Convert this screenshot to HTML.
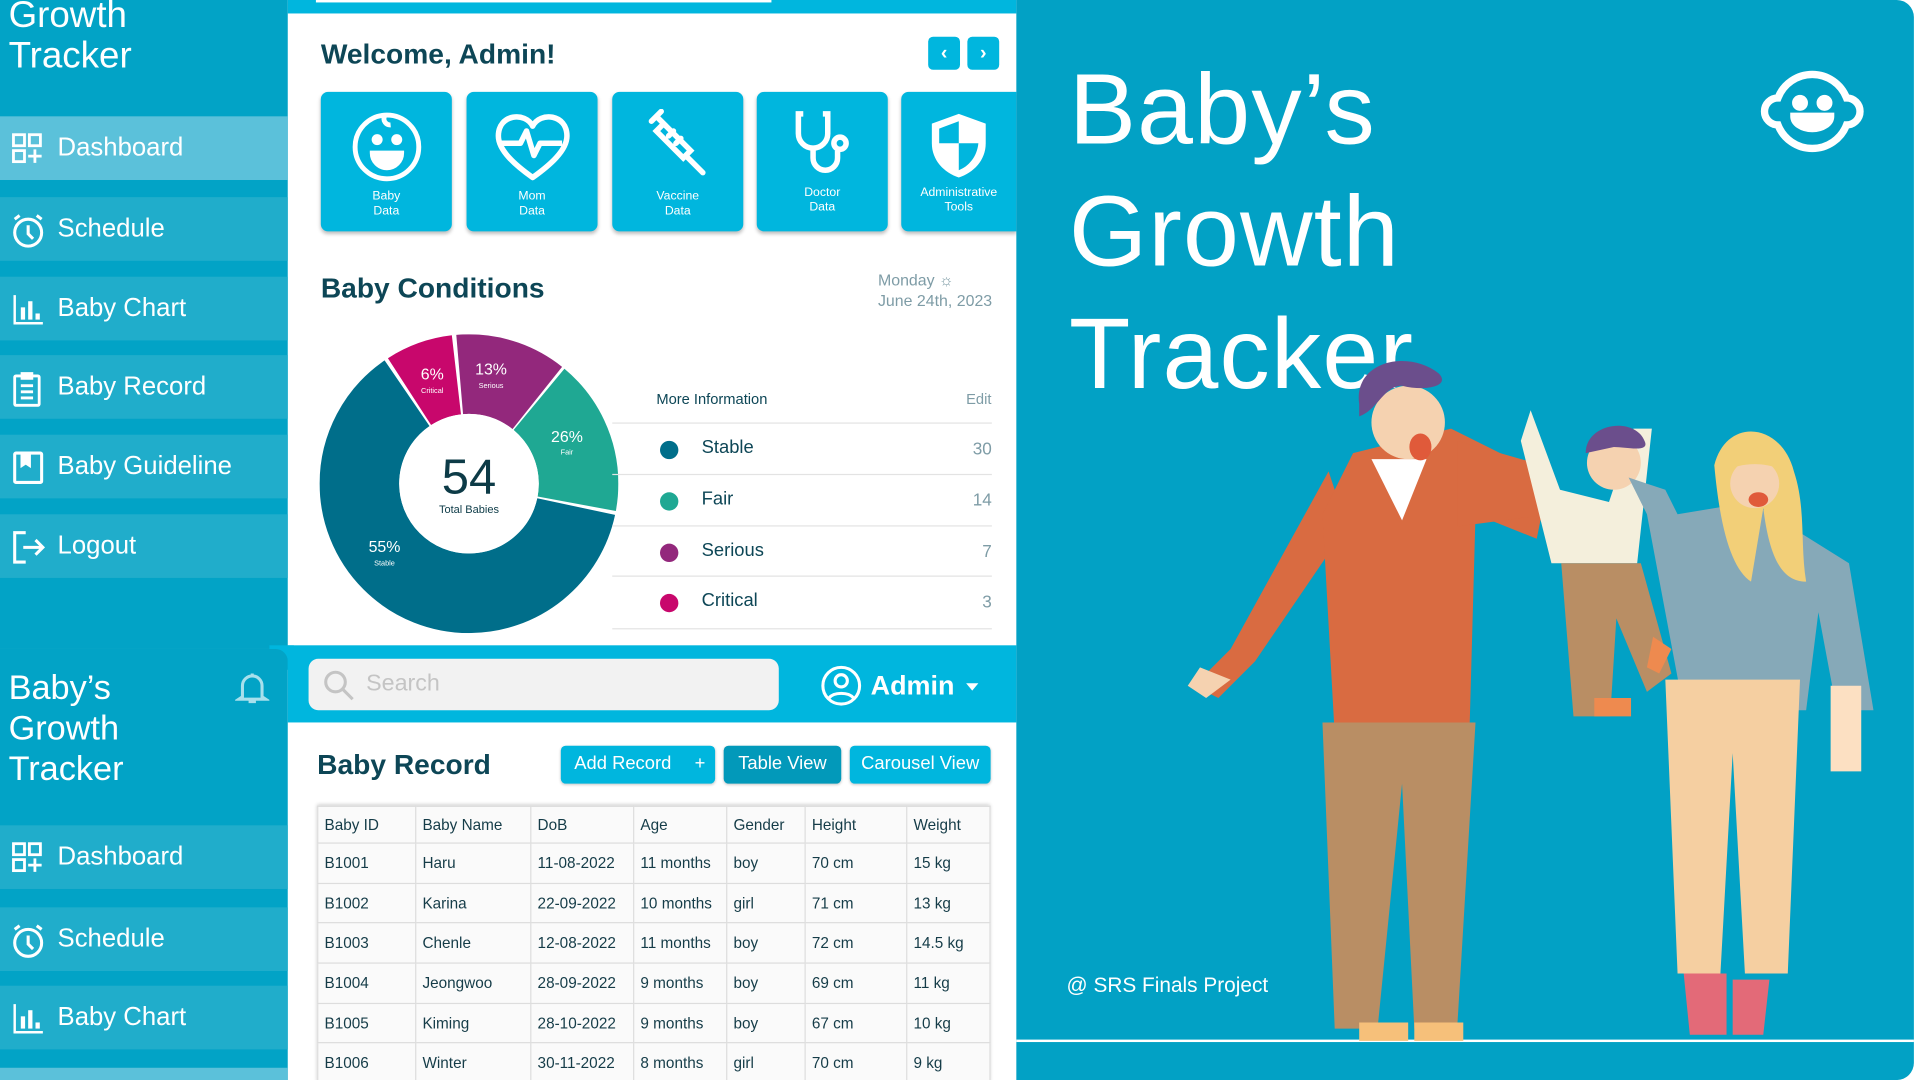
<!DOCTYPE html>
<html><head><meta charset="utf-8">
<style>
*{margin:0;padding:0;box-sizing:border-box}
html,body{width:1920px;height:1080px;overflow:hidden;background:#fff}
#w{position:absolute;left:0;top:0;width:1920px;height:1080px;overflow:hidden}
#s{position:absolute;left:0;top:0;width:1568px;height:882px;overflow:hidden;transform:scale(1.2245);transform-origin:0 0;font-family:"Liberation Sans",sans-serif}
.a{position:absolute}
.side{background:#02a3c6}
.item{position:absolute;left:0;width:235px;height:52px;background:#20adcb;color:#fff;font-size:21px;line-height:52px;padding-left:47px}
.item svg{position:absolute;left:9px;top:13px}
.card{position:absolute;top:75px;width:107px;height:114px;background:#00b6de;border-radius:6px;box-shadow:0 2px 3px rgba(0,0,0,.25);color:#fff;font-size:10px;text-align:center;line-height:12px}
.card .l{position:absolute;left:0;right:0;bottom:10px}
.card svg{position:absolute;left:50%;top:14px;transform:translateX(-50%)}
.dk{color:#0d4656}
.row{position:absolute;left:500px;width:310px;border-top:1.5px solid #e3e3e3;height:42px}
.row .d{position:absolute;left:39px;top:14px;width:15px;height:15px;border-radius:50%}
.row .t{position:absolute;left:73px;top:11px;font-size:15px;color:#0d4656}
.row .v{position:absolute;right:0;top:12px;font-size:14px;color:#7e9ca6}
table{position:absolute;left:259px;top:658px;width:550px;border-collapse:collapse;font-size:12.5px;color:#153c48;background:#fafafa;box-shadow:0 -1px 3px rgba(0,0,0,.2)}
td{border:1px solid #ddd;padding:0 5px;height:32.7px}
tr:first-child td{height:30px}
.btn{position:absolute;top:609px;height:31px;background:#00b6de;color:#fff;font-size:15px;line-height:30px;border-radius:4px;text-align:center;box-shadow:0 1px 2px rgba(0,0,0,.2)}
td:nth-child(1){width:80px}td:nth-child(2){width:94px}td:nth-child(3){width:84px}td:nth-child(4){width:76px}td:nth-child(5){width:64px}td:nth-child(6){width:83px}
</style></head><body><div id="w"><div id="s">

<div class="a side" style="left:0;top:0;width:235px;height:530px"></div>
<div class="a" style="left:7px;top:-4px;color:#fff;font-size:30px;line-height:33px">Growth<br>Tracker</div>
<div class="item" style="top:95px;background:#5bc1da">Dashboard<svg width="28" height="28" viewBox="0 0 28 28" fill="none" stroke="#fff" stroke-width="2.3"><rect x="2" y="2" width="9" height="9"/><rect x="15" y="2" width="9" height="9"/><rect x="2" y="15" width="9" height="9"/><path d="M19.5 14v11M14 19.5h11"/></svg></div>
<div class="item" style="top:161px">Schedule<svg width="30" height="30" viewBox="0 0 30 30" fill="none" stroke="#fff" stroke-width="2.5"><circle cx="14" cy="16" r="11"/><path d="M14 10v7l4 4M3 5l4-3M25 5l-4-3"/></svg></div>
<div class="item" style="top:226px">Baby Chart<svg width="28" height="28" viewBox="0 0 28 28" fill="#fff"><path d="M2 2v24h24v-2H4V2z"/><rect x="8" y="12" width="3.5" height="10"/><rect x="14" y="7" width="3.5" height="15"/><rect x="20" y="17" width="3.5" height="5"/></svg></div>
<div class="item" style="top:290px">Baby Record<svg width="28" height="30" viewBox="0 0 28 30" fill="none" stroke="#fff" stroke-width="2.3"><rect x="3" y="4" width="20" height="24" rx="1"/><path d="M9 2h8v4H9zM8 12h10M8 17h10M8 22h10"/></svg></div>
<div class="item" style="top:355px">Baby Guideline<svg width="28" height="28" viewBox="0 0 28 28" fill="none" stroke="#fff" stroke-width="2.5"><rect x="3" y="2" width="22" height="24" rx="1"/><path d="M9 2v10l3-2 3 2V2" fill="#fff"/></svg></div>
<div class="item" style="top:420px">Logout<svg width="30" height="28" viewBox="0 0 30 28" fill="none" stroke="#fff" stroke-width="2.5"><path d="M12 2H3v24h9M10 14h16M20 8l6 6-6 6"/></svg></div>

<div class="a" style="left:220px;top:527px;width:20px;height:20px;background:#00b6de"></div>
<div class="a side" style="left:0;top:530px;width:235px;height:352px;border-radius:0 10px 0 0"></div>
<div class="a" style="left:7px;top:545px;color:#fff;font-size:28px;line-height:33px">Baby’s<br>Growth<br>Tracker</div>
<svg class="a" style="left:192px;top:547px" width="28" height="30" viewBox="0 0 28 30" fill="none" stroke="#a8e0ec" stroke-width="2.5"><path d="M6 22V13a8 8 0 0 1 16 0v9l3 2H3zM14 3v2M11 26h6"/></svg>
<div class="item" style="top:674px">Dashboard<svg width="28" height="28" viewBox="0 0 28 28" fill="none" stroke="#fff" stroke-width="2.3"><rect x="2" y="2" width="9" height="9"/><rect x="15" y="2" width="9" height="9"/><rect x="2" y="15" width="9" height="9"/><path d="M19.5 14v11M14 19.5h11"/></svg></div>
<div class="item" style="top:741px">Schedule<svg width="30" height="30" viewBox="0 0 30 30" fill="none" stroke="#fff" stroke-width="2.5"><circle cx="14" cy="16" r="11"/><path d="M14 10v7l4 4M3 5l4-3M25 5l-4-3"/></svg></div>
<div class="item" style="top:805px">Baby Chart<svg width="28" height="28" viewBox="0 0 28 28" fill="#fff"><path d="M2 2v24h24v-2H4V2z"/><rect x="8" y="12" width="3.5" height="10"/><rect x="14" y="7" width="3.5" height="15"/><rect x="20" y="17" width="3.5" height="5"/></svg></div>
<div class="item" style="top:872px;height:10px;background:#5bc1da"></div>

<div class="a" style="left:235px;top:0;width:595px;height:11px;background:#00b6de"></div>
<div class="a" style="left:258px;top:0;width:372px;height:2px;background:#fff"></div>
<div class="a dk" style="left:262px;top:31px;font-size:23px;font-weight:bold">Welcome, Admin!</div>
<div class="a" style="left:758px;top:30px;width:26px;height:27px;background:#00b6de;border-radius:4px;color:#fff;text-align:center;line-height:27px;font-size:16px;font-weight:bold">‹</div>
<div class="a" style="left:790px;top:30px;width:26px;height:27px;background:#00b6de;border-radius:4px;color:#fff;text-align:center;line-height:27px;font-size:16px;font-weight:bold">›</div>

<div class="card" style="left:262px"><svg width="60" height="60" viewBox="0 0 60 60" fill="none" stroke="#fff" stroke-width="4"><circle cx="30" cy="31" r="26"/><path d="M28 6a5 5 0 0 0 5 7"/><path d="M18 36h24a12 12 0 0 1-24 0z" fill="#fff"/><circle cx="22" cy="25" r="2.5" fill="#fff"/><circle cx="38" cy="25" r="2.5" fill="#fff"/></svg><div class="l">Baby<br>Data</div></div>
<div class="card" style="left:381px"><svg width="64" height="60" viewBox="0 0 64 60" fill="none" stroke="#fff" stroke-width="4.5" stroke-linejoin="round"><path d="M32 14C26 2 4 4 4 22c0 12 14 24 28 34 14-10 28-22 28-34C60 4 38 2 32 14z"/><path d="M6 28h16l5-10 6 20 5-10h18"/></svg><div class="l">Mom<br>Data</div></div>
<div class="card" style="left:500px"><svg width="60" height="60" viewBox="0 0 60 60" fill="none" stroke="#fff" stroke-width="4.5" stroke-linecap="round"><path d="M8 10l8-8M12 6l8 8M18 12l22 22-6 6-22-22zM36 38l14 14M22 22l4-4M28 28l4-4"/></svg><div class="l">Vaccine<br>Data</div></div>
<div class="card" style="left:618px"><svg width="60" height="60" viewBox="0 0 60 60" fill="none" stroke="#fff" stroke-width="4.5"><path d="M14 4h-4v16a12 12 0 0 0 24 0V4h-4"/><path d="M22 32v8a10 10 0 0 0 20 0v-6"/><circle cx="44" cy="28" r="5"/></svg><div class="l" style="bottom:13px">Doctor<br>Data</div></div>
<div class="card" style="left:736px;width:94px;border-radius:6px 0 0 6px"><svg width="56" height="60" viewBox="0 0 56 60" fill="#fff"><path d="M28 4L6 12v16c0 14 10 24 22 28 12-4 22-14 22-28V12z"/><path d="M28 10L12 16v12h16zM28 28v22c8-3 15-11 16-22z" fill="#00b6de"/></svg><div class="l" style="bottom:13px">Administrative<br>Tools</div></div>

<div class="a dk" style="left:262px;top:222px;font-size:23px;font-weight:bold">Baby Conditions</div>
<div class="a" style="left:717px;top:220px;font-size:13px;color:#7e9ca6;line-height:17px">Monday ☼<br>June 24th, 2023</div>

<svg class="a" style="left:261px;top:273px" width="244" height="244" viewBox="0 0 244 244">
<g transform="rotate(-90 122 122)" fill="none" stroke-width="65">
<circle cx="122" cy="122" r="89.5" stroke="#006e8a" stroke-dasharray="349 213.3" stroke-dashoffset="402.9"/>
<circle cx="122" cy="122" r="89.5" stroke="#1fa893" stroke-dasharray="95 467.3" stroke-dashoffset="500.3"/>
<circle cx="122" cy="122" r="89.5" stroke="#93287c" stroke-dasharray="68 494.3" stroke-dashoffset="7.8"/>
<circle cx="122" cy="122" r="89.5" stroke="#c8076c" stroke-dasharray="41 521.3" stroke-dashoffset="51.5"/>
</g>
<circle cx="122" cy="122" r="57" fill="#fff"/>
<text x="122" y="130" text-anchor="middle" font-size="40" fill="#0d3b47" font-family="Liberation Sans">54</text>
<text x="122" y="146" text-anchor="middle" font-size="9" fill="#0d3b47" font-family="Liberation Sans">Total Babies</text>
<g fill="#fff" font-family="Liberation Sans" text-anchor="middle">
<text x="92" y="37" font-size="13">6%</text><text x="92" y="48" font-size="6">Critical</text>
<text x="140" y="33" font-size="13">13%</text><text x="140" y="44" font-size="6">Serious</text>
<text x="202" y="88" font-size="13">26%</text><text x="202" y="98" font-size="6">Fair</text>
<text x="53" y="178" font-size="13">55%</text><text x="53" y="189" font-size="6">Stable</text>
</g></svg>

<div class="a dk" style="left:536px;top:319px;font-size:12px">More Information</div>
<div class="a" style="left:789px;top:319px;font-size:12px;color:#7e9ca6">Edit</div>
<div class="row" style="top:345px"><div class="d" style="background:#006e8a"></div><div class="t">Stable</div><div class="v">30</div></div>
<div class="row" style="top:387px"><div class="d" style="background:#1fa893"></div><div class="t">Fair</div><div class="v">14</div></div>
<div class="row" style="top:429px"><div class="d" style="background:#93287c"></div><div class="t">Serious</div><div class="v">7</div></div>
<div class="row" style="top:470px"><div class="d" style="background:#c8076c"></div><div class="t">Critical</div><div class="v">3</div></div>
<div class="a" style="left:500px;top:513px;width:310px;border-top:1.5px solid #e3e3e3"></div>

<div class="a" style="left:235px;top:527px;width:595px;height:63px;background:#00b6de"></div>
<div class="a" style="left:252px;top:538px;width:384px;height:42px;background:#f2f2f2;border-radius:8px"></div>
<svg class="a" style="left:263px;top:546px" width="28" height="28" viewBox="0 0 28 28" fill="none" stroke="#c4c4c4" stroke-width="2.5"><circle cx="11" cy="11" r="8"/><path d="M17 17l8 8"/></svg>
<div class="a" style="left:299px;top:548px;font-size:19px;color:#c4c4c4">Search</div>
<svg class="a" style="left:670px;top:543px" width="34" height="34" viewBox="0 0 34 34" fill="none" stroke="#fff" stroke-width="2.5"><circle cx="17" cy="17" r="15"/><circle cx="17" cy="13" r="5"/><path d="M7 27c4-5 16-5 20 0"/></svg>
<div class="a" style="left:711px;top:547px;font-size:22px;color:#fff;font-weight:bold">Admin</div>
<div class="a" style="left:789px;top:558px;border:5px solid transparent;border-top:6px solid #fff"></div>

<div class="a dk" style="left:259px;top:611px;font-size:23px;font-weight:bold">Baby Record</div>
<div class="btn" style="left:458px;width:126px;text-align:left;padding-left:11px">Add Record <span style="position:absolute;right:8px">+</span></div>
<div class="btn" style="left:591px;width:96px;background:#0299ba">Table View</div>
<div class="btn" style="left:694px;width:115px">Carousel View</div>

<table>
<tr><td>Baby ID</td><td>Baby Name</td><td>DoB</td><td>Age</td><td>Gender</td><td>Height</td><td>Weight</td></tr>
<tr><td>B1001</td><td>Haru</td><td>11-08-2022</td><td>11 months</td><td>boy</td><td>70 cm</td><td>15 kg</td></tr>
<tr><td>B1002</td><td>Karina</td><td>22-09-2022</td><td>10 months</td><td>girl</td><td>71 cm</td><td>13 kg</td></tr>
<tr><td>B1003</td><td>Chenle</td><td>12-08-2022</td><td>11 months</td><td>boy</td><td>72 cm</td><td>14.5 kg</td></tr>
<tr><td>B1004</td><td>Jeongwoo</td><td>28-09-2022</td><td>9 months</td><td>boy</td><td>69 cm</td><td>11 kg</td></tr>
<tr><td>B1005</td><td>Kiming</td><td>28-10-2022</td><td>9 months</td><td>boy</td><td>67 cm</td><td>10 kg</td></tr>
<tr><td>B1006</td><td>Winter</td><td>30-11-2022</td><td>8 months</td><td>girl</td><td>70 cm</td><td>9 kg</td></tr>
</table>

<div class="a" style="left:830px;top:0;width:733px;height:882px;background:#02a1c5;border-radius:0 14px 14px 0"></div>
<div class="a" style="left:830px;top:849px;width:733px;height:2px;background:#fff"></div>
<div class="a" style="left:873px;top:40px;color:#fff;font-size:82px;line-height:100px;letter-spacing:1px">Baby’s<br>Growth<br>Tracker</div>
<svg class="a" style="left:1435px;top:55px" width="90" height="72" viewBox="0 0 90 72" fill="none" stroke="#fff" stroke-width="6"><path d="M17 25a30 30 0 0 1 56 0a10 10 0 0 1 0 22a30 30 0 0 1-56 0a10 10 0 0 1 0-22z"/><circle cx="35" cy="29" r="3.5" fill="#fff"/><circle cx="55" cy="29" r="3.5" fill="#fff"/><path d="M30 40h30a15 10 0 0 1-30 0z" fill="#fff"/></svg>
<div class="a" style="left:871px;top:795px;color:#fff;font-size:17px">@ SRS Finals Project</div>

<svg class="a" style="left:960px;top:285px" width="570" height="570" viewBox="960 285 570 570">
<path d="M1085 385L1005 530l-30 30 20 10 30-30 75-110z" fill="#d96b41"/>
<path d="M980 545l-10 15 15 10 20-15z" fill="#f5d2b0"/>
<path d="M1105 370l80-20 80 40-10 50-50-20-5 180h-110l-10-180z" fill="#d96b41"/>
<path d="M1190 360l70 20 5 40-75 10z" fill="#d96b41"/>
<path d="M1080 590h125l-15 250h-35l-10-200-20 200h-35z" fill="#b98e64"/>
<path d="M1110 835h40v15h-40zM1155 835h40v15h-40z" fill="#f6c07a"/>
<path d="M1120 375l25 50 20-50z" fill="#fff"/>
<circle cx="1150" cy="345" r="30" fill="#f5d2b0"/>
<path d="M1110 330c-5-35 40-45 65-25 10 10-10 15-30 10-15 0-20 20-35 25z" fill="#6b4e8c"/>
<ellipse cx="1160" cy="365" rx="9" ry="11" fill="#e05a3a"/>
<path d="M1250 335l-8 25 25 100h70l12-110-15 0-20 60-40-10z" fill="#f4efdc"/>
<circle cx="1318" cy="378" r="22" fill="#f5d2b0"/>
<path d="M1295 370c0-25 40-30 48-10 5 10-15 5-25 5z" fill="#6b4e8c"/>
<path d="M1275 460h65l25 90-20 15-25-60-5 80h-30z" fill="#b98e64"/>
<path d="M1302 570h30v15h-30zM1350 520l15 10-10 20-10-5z" fill="#ee8a4f"/>
<path d="M1345 420l-15-30 30 10 10 20 60-10 80 50 20 120-30 0-15-80-10 80h-100z" fill="#86a9b8"/>
<path d="M1495 560h25v70h-25z" fill="#fce0c2"/>
<path d="M1360 555h110l-10 240h-35l-10-180-10 180h-35z" fill="#f5cfa1"/>
<path d="M1375 795h35v50h-30zM1415 800h30l-5 45h-25z" fill="#e36a78"/>
<path d="M1400 380c10-40 55-35 65 5 10 30 5 60 10 90-20 0-30-20-35-60l-10 60c-15-10-25-40-30-95z" fill="#f2cf78"/>
<circle cx="1433" cy="395" r="20" fill="#f5d2b0"/>
<path d="M1408 385c10-25 45-25 50 0-15-8-35-8-50 0z" fill="#f2cf78"/>
<ellipse cx="1436" cy="408" rx="8" ry="6" fill="#e05a3a"/>
</svg>
</div></div></body></html>
